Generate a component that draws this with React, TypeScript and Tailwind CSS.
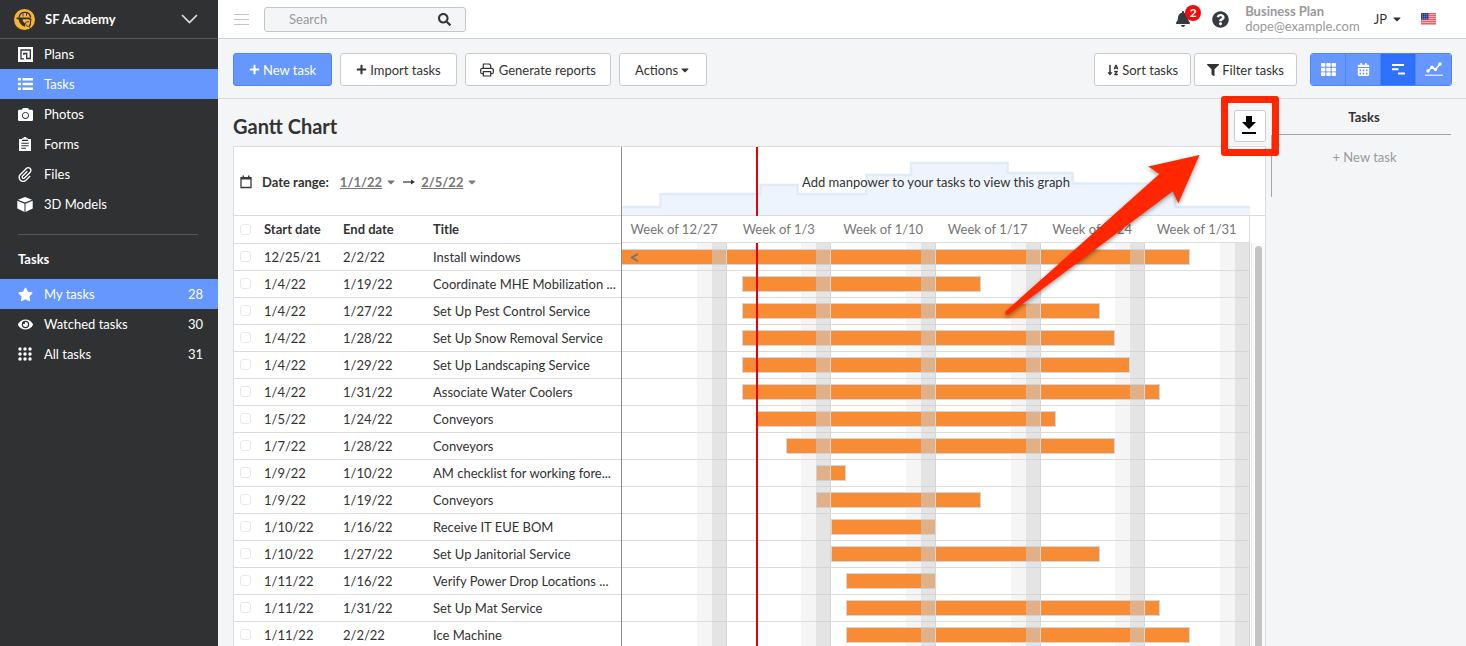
import type { ReactNode } from "react";
import {
  FaBell,
  FaCalendarAlt,
  FaCamera,
  FaCaretDown,
  FaEye,
  FaFilter,
  FaPlus,
  FaQuestionCircle,
  FaSearch,
  FaSortAlphaDown,
  FaStar,
  FaTh,
} from "react-icons/fa";
import { ImAttachment } from "react-icons/im";

const DAYS = 42;

const weeks = ["12/27", "1/3", "1/10", "1/17", "1/24", "1/31"];

// from / to are day indexes counted from 12/27, "to" is exclusive
const tasks = [
  { start: "12/25/21", end: "2/2/22", title: "Install windows", from: 0, to: 38, clipped: true },
  { start: "1/4/22", end: "1/19/22", title: "Coordinate MHE Mobilization ...", from: 8, to: 24 },
  { start: "1/4/22", end: "1/27/22", title: "Set Up Pest Control Service", from: 8, to: 32 },
  { start: "1/4/22", end: "1/28/22", title: "Set Up Snow Removal Service", from: 8, to: 33 },
  { start: "1/4/22", end: "1/29/22", title: "Set Up Landscaping Service", from: 8, to: 34 },
  { start: "1/4/22", end: "1/31/22", title: "Associate Water Coolers", from: 8, to: 36 },
  { start: "1/5/22", end: "1/24/22", title: "Conveyors", from: 9, to: 29 },
  { start: "1/7/22", end: "1/28/22", title: "Conveyors", from: 11, to: 33 },
  { start: "1/9/22", end: "1/10/22", title: "AM checklist for working fore...", from: 13, to: 15 },
  { start: "1/9/22", end: "1/19/22", title: "Conveyors", from: 13, to: 24 },
  { start: "1/10/22", end: "1/16/22", title: "Receive IT EUE BOM", from: 14, to: 21 },
  { start: "1/10/22", end: "1/27/22", title: "Set Up Janitorial Service", from: 14, to: 32 },
  { start: "1/11/22", end: "1/16/22", title: "Verify Power Drop Locations ...", from: 15, to: 21 },
  { start: "1/11/22", end: "1/31/22", title: "Set Up Mat Service", from: 15, to: 36 },
  { start: "1/11/22", end: "2/2/22", title: "Ice Machine", from: 15, to: 38 },
];

const percent = (days: number) => `${(days / DAYS) * 100}%`;

function PlansIcon() {
  return (
    <svg width="15" height="15" viewBox="0 0 15 15">
      <path fill="#fff" d="M0 0h15v15H0z" />
      <path
        fill="none"
        stroke="#303133"
        strokeWidth="1.3"
        d="M6 11.800H3V3h9.300v8.500H8.700V6.500H5.800v1.500"
      />
    </svg>
  );
}

function ListIcon() {
  return (
    <svg width="15" height="12" viewBox="0 0 15 12" fill="currentColor">
      <path d="M0 0h3v2.500H0zM4.500 0H15v2.500H4.500zM0 4.700h3v2.500H0zM4.500 4.700H15v2.500H4.500zM0 9.400h3v2.500H0zM4.500 9.400H15v2.500H4.500z" />
    </svg>
  );
}

function FormsIcon() {
  return (
    <svg width="12" height="14" viewBox="0 0 12 14">
      <path fill="#fff" d="M0 2h3V1.200h1.500a1.500 1.500 0 0 1 3 0H9V2h3v12H0z" />
      <path
        stroke="#303133"
        strokeWidth="1.100"
        d="M3 3.400h6M2.300 6.200h7.400M2.300 8.700h7.400M2.300 11.300h4.700"
      />
    </svg>
  );
}

function CubeIcon() {
  return (
    <svg width="16" height="15" viewBox="0 0 16 15" fill="currentColor">
      <path d="M8 0 15 2.700 8 5.600 1 2.700zM.3 3.800l7.200 3v8.100L.3 11.600zM15.700 3.800l-7.200 3v8.100l7.200-3.300z" />
    </svg>
  );
}

function DotsIcon() {
  return (
    <svg width="14" height="14" viewBox="0 0 14 14" fill="currentColor">
      {[2, 7, 12].map((y) =>
        [2, 7, 12].map((x) => <circle key={`${x}-${y}`} cx={x} cy={y} r="1.7" />)
      )}
    </svg>
  );
}

function LogoIcon() {
  return (
    <svg width="21" height="21" viewBox="0 0 21 21">
      <circle cx="10.5" cy="10.5" r="10.5" fill="#fbb435" />
      <path
        fill="none"
        stroke="#303133"
        strokeWidth="1.400"
        d="M5.100 8.500C5.500 5.300 7.700 3.400 10.900 3.400s5.400 2 5.800 5.300"
      />
      <path fill="none" stroke="#303133" strokeWidth=".9" d="M9 4.500v3M12.500 4.200v2.600" />
      <path fill="#303133" d="M2.600 8.600h12.600l2.400 1.600-.2 1.200-3-1.200H8.800v1.900l1.800 2.100 1.200-.3-.9 3.900-2.800-1.300-2.700-3.300-.8-2.900H2.600z" />
      <path fill="#303133" d="M16 11.300h1.200l-.3 4.400-1.700 3.300-.9-1.600 1.500-2.600z" />
      <path fill="none" stroke="#303133" strokeWidth=".9" d="M10.800 14.300 13 12.800h2M12.300 15.500l1.300 2.500" />
    </svg>
  );
}

function PrintIcon() {
  return (
    <svg
      width="14"
      height="14"
      viewBox="0 0 14 14"
      fill="none"
      stroke="currentColor"
      strokeWidth="1.200"
      strokeLinejoin="round"
    >
      <path d="M3.300 5.200V1h6l1.400 1.400v2.800M3.300 10.700H2.200A1.500 1.500 0 0 1 .7 9.200V7A1.700 1.700 0 0 1 2.400 5.300h9.200A1.700 1.700 0 0 1 13.300 7v2.200a1.500 1.500 0 0 1-1.500 1.500h-1.100M3.300 8.700h7.400V13H3.300z" />
    </svg>
  );
}

function GanttIcon() {
  return (
    <svg width="13" height="11" viewBox="0 0 13 11" fill="currentColor">
      <path d="M0 0h12v2H0zM0 4.300h6.500v2H0zM6 8.600h7v2H6z" />
    </svg>
  );
}

function ChartIcon() {
  return (
    <svg width="18" height="15" viewBox="0 0 18 15" fill="currentColor">
      <path fill="none" stroke="currentColor" strokeWidth="1.500" d="M3 9 7 5.300 10.500 7.500 15 2" />
      <circle cx="3" cy="9" r="1.700" />
      <circle cx="7" cy="5.300" r="1.700" />
      <circle cx="10.500" cy="7.500" r="1.700" />
      <circle cx="15" cy="2" r="1.700" />
      <path opacity=".7" d="M0 12.500h18V14H0z" />
    </svg>
  );
}

function FlagIcon() {
  return (
    <svg width="15" height="12" viewBox="0 0 15 12">
      <path fill="#fff" d="M0 0h15v12H0z" />
      {[0, 2, 4, 6, 8, 10].map((y) => (
        <path key={y} fill="#d8232f" d={`M0 ${y + 0.3}h15v1.100H0z`} />
      ))}
      <path fill="#3b3f8f" d="M0 0h7.500v6.500H0z" />
      {[1, 3, 5].map((y) =>
        [1, 3, 5].map((x) => (
          <circle key={`${x}-${y}`} cx={x + 0.6} cy={y + 0.2} r=".4" fill="#fff" />
        ))
      )}
    </svg>
  );
}

type NavItemProps = { icon: ReactNode; label: string; count?: number; active?: boolean };

function NavItem({ icon, label, count, active }: NavItemProps) {
  return (
    <a
      href="#"
      className={`flex h-[30px] items-center pr-[15px] pl-4 text-[13px] text-white ${
        active ? "bg-[#6597ff]" : ""
      }`}
    >
      <span className="mr-2.5 flex w-[18px] shrink-0 justify-center text-[15px]">{icon}</span>
      <span className="flex-1">{label}</span>
      {count !== undefined && <span>{count}</span>}
    </a>
  );
}

function Sidebar() {
  return (
    <nav className="w-[218px] shrink-0 bg-[#303133] text-white">
      <button
        type="button"
        className="flex h-[39px] w-full items-center border-b border-[#555658] pr-5 pl-3.5 text-[13px] font-bold"
      >
        <LogoIcon />
        <span className="ml-2.5 flex-1 text-left">SF Academy</span>
        <svg width="17" height="10" viewBox="0 0 17 10">
          <path fill="none" stroke="#ddd" strokeWidth="1.700" d="m1 1 7.500 7.500L16 1" />
        </svg>
      </button>
      <NavItem icon={<PlansIcon />} label="Plans" />
      <NavItem icon={<ListIcon />} label="Tasks" active />
      <NavItem icon={<FaCamera />} label="Photos" />
      <NavItem icon={<FormsIcon />} label="Forms" />
      <NavItem icon={<ImAttachment />} label="Files" />
      <NavItem icon={<CubeIcon />} label="3D Models" />
      <hr className="mt-[15px] mr-5 ml-[18px] border-[#555658]" />
      <h2 className="mt-3.5 mb-2.5 px-[18px] text-[13px] font-bold">Tasks</h2>
      <NavItem icon={<FaStar />} label="My tasks" count={28} active />
      <NavItem icon={<FaEye />} label="Watched tasks" count={30} />
      <NavItem icon={<DotsIcon />} label="All tasks" count={31} />
    </nav>
  );
}

function Header() {
  return (
    <header className="flex h-[39px] shrink-0 items-center border-b border-[#cfcfcf] bg-white pr-[30px] pl-4">
      <button type="button" aria-label="Menu" className="flex flex-col gap-1">
        <span className="h-px w-[15px] bg-[#c4c4c4]" />
        <span className="h-px w-[15px] bg-[#c4c4c4]" />
        <span className="h-px w-[15px] bg-[#c4c4c4]" />
      </button>
      <form className="ml-[15px] flex h-[25px] w-[202px] items-center rounded-[3px] border border-[#c4c6c6] bg-[#f4f5f7] pr-3.5 pl-6">
        <input
          type="text"
          aria-label="Search"
          placeholder="Search"
          className="w-full min-w-0 flex-1 text-[13px] outline-none placeholder:text-[#999]"
        />
        <button type="button" aria-label="Run search" className="text-[13px]">
          <FaSearch />
        </button>
      </form>
      <div className="ml-auto flex items-center">
        <button type="button" aria-label="Notifications" className="relative text-base text-[#343a40]">
          <FaBell />
          <span className="absolute -top-1.5 left-2.5 flex size-4 items-center justify-center rounded-full bg-[#f30a0a] text-xs font-bold text-white">
            2
          </span>
        </button>
        <button type="button" aria-label="Help" className="ml-[21px] text-[17px] text-[#343a40]">
          <FaQuestionCircle />
        </button>
        <div className="ml-4 text-[13px] leading-[15px] text-[#999]">
          <p className="font-bold">Business Plan</p>
          <p>dope@example.com</p>
        </div>
        <button type="button" className="ml-3.5 flex items-center gap-1 text-[13px]">
          JP <FaCaretDown className="text-xs" />
        </button>
        <button type="button" aria-label="Language" className="ml-[18px]">
          <FlagIcon />
        </button>
      </div>
    </header>
  );
}

type ToolButtonProps = { children: ReactNode; className?: string };

function ToolButton({ children, className = "" }: ToolButtonProps) {
  return (
    <button
      type="button"
      className={`flex h-[33px] items-center justify-center gap-[3px] rounded-[3px] border text-[13px] whitespace-nowrap ${className}`}
    >
      {children}
    </button>
  );
}

function Toolbar() {
  const views = [
    { label: "Grid view", icon: <FaTh /> },
    { label: "Calendar view", icon: <FaCalendarAlt className="text-[13px]" /> },
    { label: "Gantt view", icon: <GanttIcon />, active: true },
    { label: "Report view", icon: <ChartIcon /> },
  ];

  return (
    <div className="flex h-[60px] shrink-0 items-center gap-2 border-b border-[#dadbdc] pt-0.5 pr-3.5 pl-[15px]">
      <ToolButton className="border-[#4d85ff] bg-[#6597ff] px-[15px] text-white">
        <FaPlus className="text-[11px]" /> New task
      </ToolButton>
      <ToolButton className="border-[#cacccc] bg-white px-[15px]">
        <FaPlus className="text-[11px]" /> Import tasks
      </ToolButton>
      <ToolButton className="border-[#cacccc] bg-white px-3.5">
        <PrintIcon />
        <span className="ml-0.5">Generate reports</span>
      </ToolButton>
      <ToolButton className="border-[#cacccc] bg-white px-[15px]">
        Actions <FaCaretDown className="-ml-0.5 text-xs" />
      </ToolButton>
      <div className="ml-auto flex items-center gap-[3px]">
        <ToolButton className="border-[#cacccc] bg-white px-3">
          <FaSortAlphaDown className="text-xs" /> Sort tasks
        </ToolButton>
        <ToolButton className="border-[#cacccc] bg-white px-3">
          <FaFilter className="text-xs" /> Filter tasks
        </ToolButton>
      </div>
      <div className="ml-[5px] flex h-[33px] overflow-hidden rounded-[3px] border border-[#4d85ff] text-white">
        {views.map((view) => (
          <button
            key={view.label}
            type="button"
            aria-label={view.label}
            className={`flex w-[35px] items-center justify-center border-r border-[#4d85ff] text-[15px] last:border-r-0 ${
              view.active ? "bg-[#2f70ff] shadow-inner" : "bg-[#6597ff]"
            }`}
          >
            {view.icon}
          </button>
        ))}
      </div>
    </div>
  );
}

function Checkbox({ label }: { label: string }) {
  return (
    <input
      type="checkbox"
      aria-label={label}
      className="ml-1.5 block size-[11px] appearance-none rounded-[3px] border border-[#e8e8e8] bg-white"
    />
  );
}

function TaskTable() {
  return (
    <table className="w-full table-fixed border-collapse text-left text-[13px]">
      <colgroup>
        <col className="w-[30px]" />
        <col className="w-[79px]" />
        <col className="w-[90px]" />
        <col />
      </colgroup>
      <thead>
        <tr className="h-[27px] border-b border-[#dcdcdc]">
          <th>
            <Checkbox label="Select all tasks" />
          </th>
          <th>Start date</th>
          <th>End date</th>
          <th>Title</th>
        </tr>
      </thead>
      <tbody>
        {tasks.map((task, i) => (
          <tr key={i} className="h-[27px] border-b border-[#dcdcdc]">
            <td>
              <Checkbox label={`Select ${task.title}`} />
            </td>
            <td>{task.start}</td>
            <td>{task.end}</td>
            <td className="truncate">{task.title}</td>
          </tr>
        ))}
      </tbody>
    </table>
  );
}

function ManpowerGraph() {
  return (
    <div className="relative mr-[15px] flex h-[68px] items-center justify-center pt-0.5">
      <svg
        className="absolute inset-0 h-full w-full"
        viewBox="0 0 628 68"
        preserveAspectRatio="none"
      >
        <path
          fill="#eef4fd"
          d="M0 60H38.500V47H138.500V38H175.500V47H244.500V28H289V16H385.500V26H450.500V36.500H553V60H628V68H0z"
        />
        <path
          fill="none"
          stroke="#e1ebf8"
          strokeWidth="2.500"
          d="M0 60H38.500V47H138.500V38H175.500V47H244.500V28H289V16H385.500V26H450.500V36.500H553V60H628"
        />
      </svg>
      <p className="relative text-[13px]">Add manpower to your tasks to view this graph</p>
    </div>
  );
}

function Timeline() {
  return (
    <div className="relative mr-[15px]">
      <div className="relative z-10 grid h-[27px] grid-cols-6 items-center border-r border-b border-[#dcdcdc] bg-white text-center text-[13px] text-[#777]">
        {weeks.map((week) => (
          <span key={week}>Week of {week}</span>
        ))}
      </div>
      <div className="relative">
        {/* saturdays, under the bars */}
        <div className="absolute inset-0 grid grid-cols-6">
          {weeks.map((week) => (
            <div key={week} className="grid grid-cols-7">
              <div className="col-start-6 bg-[#f5f5f5]" />
            </div>
          ))}
        </div>
        <div className="relative pt-px">
          {tasks.map((task, i) => (
            <div key={i} className="h-[27px] border-b border-[#dcdcdc] pt-[5px]">
              <div
                className={`flex h-4 items-center border-[#d3d6da] bg-[#f78c35] pl-[7px] text-lg font-bold text-[#777] ${
                  task.clipped ? "border-y border-r" : "border"
                }`}
                style={{ marginLeft: percent(task.from), width: percent(task.to - task.from) }}
              >
                {task.clipped && "<"}
              </div>
            </div>
          ))}
        </div>
        {/* sundays, over the bars */}
        <div className="absolute inset-0 grid grid-cols-6">
          {weeks.map((week) => (
            <div key={week} className="grid grid-cols-7">
              <div className="col-start-7 border-r border-[#d6d6d6] bg-[#cecece]/55" />
            </div>
          ))}
        </div>
      </div>
    </div>
  );
}

function DownloadButton() {
  return (
    <div className="relative z-20">
      <button
        type="button"
        aria-label="Download"
        className="flex size-8 items-center justify-center rounded-[3px] border border-[#c9ccd3] bg-white"
      >
        <svg width="24" height="24" viewBox="0 0 24 24" fill="#000">
          <path d="M18 8h-4V2H8v6H4l7 7 7-7zM4 18v2h14v-2H4z" />
        </svg>
      </button>
      <div className="pointer-events-none absolute -inset-x-[13px] -inset-y-3.5 rounded-[3px] border-[7px] border-[#ff2600]" />
      <svg
        className="pointer-events-none absolute top-10 right-15 drop-shadow-[0_2px_2px_rgba(0,0,0,0.4)]"
        width="206"
        height="170"
        viewBox="0 0 206 170"
      >
        <path
          fill="#ff2600"
          d="M199.500 5 148.300 16.500 159.400 24 5.500 161.500Q4.500 165.500 8.500 164.500L172.700 41.300 178.300 53.300z"
        />
      </svg>
    </div>
  );
}

function DateRange() {
  return (
    <div className="flex h-[69px] items-center border-b border-[#dcdcdc] pt-0.5 pl-1.5 text-[13px]">
      <svg width="12" height="14" viewBox="0 0 12 14">
        <path fill="none" stroke="#3a3a3a" strokeWidth="1.300" d="M1 2.700h10v9.800H1z" />
        <path fill="#3a3a3a" d="M1 2.500h10v2H1zM2.500 .500H4V3H2.500zM8 .500h1.500V3H8z" />
      </svg>
      <span className="ml-2.5 font-bold">Date range:</span>
      <button type="button" className="ml-[11px] flex items-center gap-[3px] font-bold text-[#777]">
        <span className="underline">1/1/22</span> <FaCaretDown className="text-xs" />
      </button>
      <svg className="mx-1.5" width="12" height="8" viewBox="0 0 12 8">
        <path fill="none" stroke="#333" strokeWidth="1.200" d="M0 4h10" />
        <path fill="#333" d="m8 1.500 4 2.500-4 2.500z" />
      </svg>
      <button type="button" className="flex items-center gap-[3px] font-bold text-[#777]">
        <span className="underline">2/5/22</span> <FaCaretDown className="text-xs" />
      </button>
    </div>
  );
}

export default function App() {
  return (
    <div className="flex h-screen overflow-hidden bg-[#f4f5f7] font-[Lato,sans-serif] leading-5 text-[#333]">
      <Sidebar />
      <div className="flex min-w-0 flex-1 flex-col">
        <Header />
        <Toolbar />
        <div className="flex min-h-0 flex-1 px-[15px]">
          <main className="flex min-w-0 flex-1 flex-col">
            <div className="flex h-[47px] shrink-0 items-center justify-between pt-1.5">
              <h1 className="text-xl font-bold">Gantt Chart</h1>
              <DownloadButton />
            </div>
            <div className="flex min-h-0 flex-1 overflow-hidden border-t border-r border-l border-[#dcdcdc] bg-white">
              <div className="w-[388px] shrink-0 border-r border-[#8c8c8c]">
                <DateRange />
                <TaskTable />
              </div>
              <div className="relative flex-1">
                {/* today */}
                <div className="absolute inset-y-0 right-[15px] left-0 z-[5]">
                  <div
                    className="relative -ml-px h-full w-0.5 bg-[#e8000b]"
                    style={{ left: percent(9) }}
                  />
                </div>
                <ManpowerGraph />
                <div className="border-t border-[#dcdcdc]">
                  <Timeline />
                </div>
                {/* scrollbar */}
                <div className="absolute top-[96px] right-0 bottom-0 w-3.5 border-l border-[#e4e4e4] bg-[#fafafa] px-[3px] pt-[3px]">
                  <div className="h-full rounded-t-full bg-[#c3c3c3]" />
                </div>
              </div>
            </div>
          </main>
          <aside className="ml-[5px] w-[180px] shrink-0">
            <div className="ml-1.5 flex h-9 items-center justify-center border-b border-[#a6a6a6] text-[13px] font-bold">
              Tasks
            </div>
            <div className="flex h-[62px] justify-center border-l border-[#a6a6a6] pt-3 pl-1.5">
              <button type="button" className="h-5 text-[13px] text-[#999]">
                + New task
              </button>
            </div>
          </aside>
        </div>
      </div>
    </div>
  );
}
